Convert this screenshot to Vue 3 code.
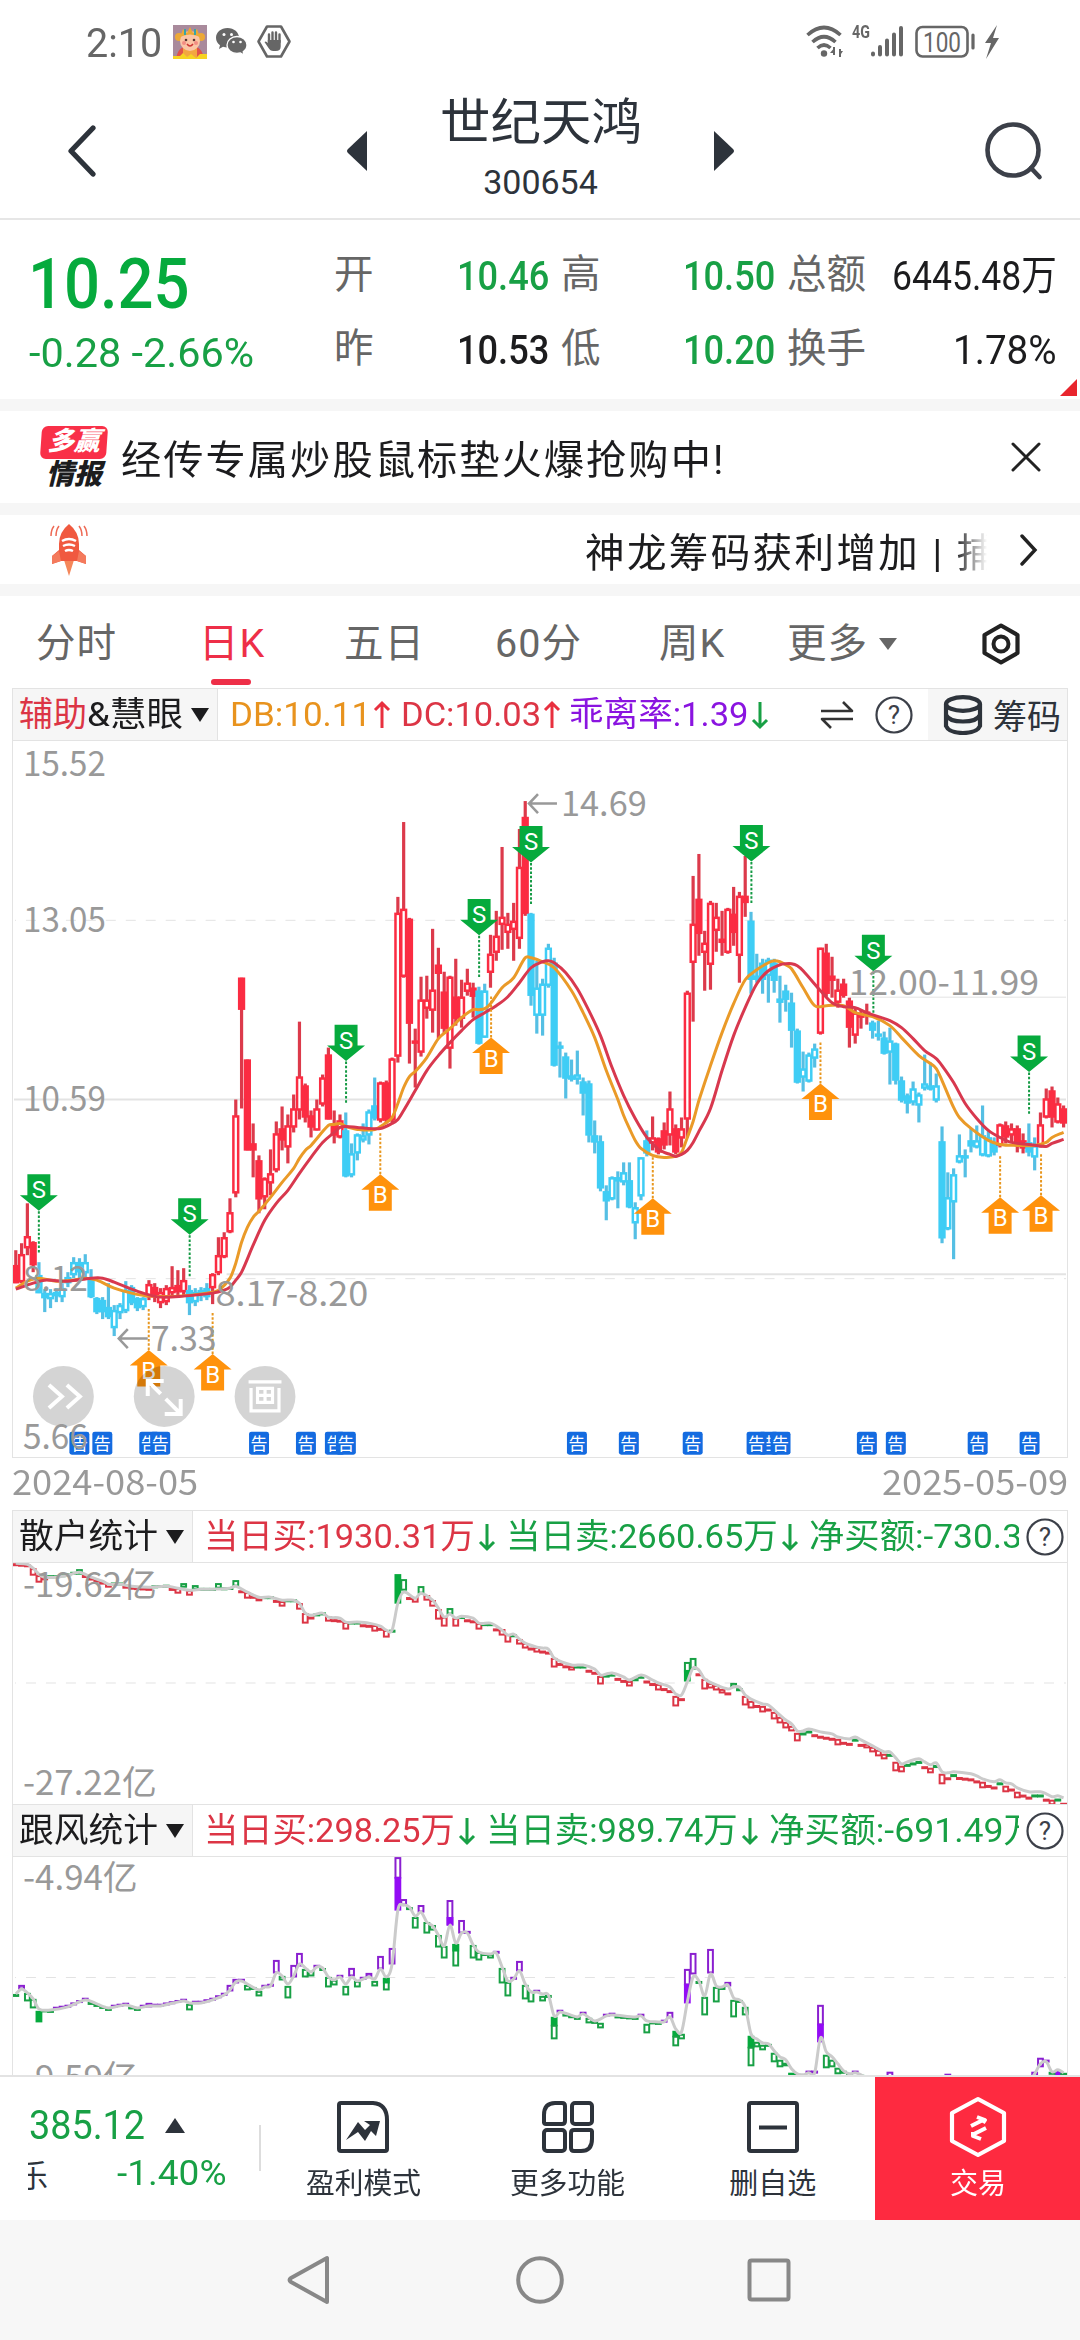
<script setup>
// 把文字横向缩放到指定宽度
const vFit = {
  mounted(el, { value }) {
    el.style.display = 'inline-block'
    el.style.whiteSpace = 'nowrap'
    const w = el.offsetWidth
    el.style.transformOrigin = 'left center'
    el.style.transform = `scaleX(${value / w})`
    el.style.marginRight = `${value - w}px`
  }
}

const STEP = 5.8
const xAt = (i) => 14.8 + STEP * i

// 每根K线: 最高 最低 实体上 实体下 类型(r/b空心, R/B实心)
const kRaw = `510 543 525 543 R,503 543 514 542 r,463 515 496 508 r,501 532 502 525 R,522 553 535 553 B,549 572 553 558 B,549 568 553 559 b,548 562 552 556 B,543 562 548 557 b,532 547 537 543 b,
517 538 522 535 b,518 540 522 532 B,514 538 522 533 b,529 558 538 557 B,557 574 558 572 B,557 579 560 572 B,543 579 567 577 B,565 596 570 588 b,563 579 565 573 b,541 573 550 571 b,
545 565 547 563 B,557 571 558 568 B,557 570 558 567 b,540 560 544 557 r,543 562 547 557 R,548 568 552 563 r,545 565 548 562 r,526 557 547 553 r,530 555 545 552 R,528 555 540 552 r,
545 575 550 563 B,548 566 552 562 b,547 561 550 555 B,543 560 548 557 B,533 564 534 548 r,497 535 515 533 r,492 518 497 517 r,458 493 472 492 r,359 457 375 453 r,237 368 237 269 R,
319 410 319 410 R,383 437 403 410 R,415 473 420 459 R,437 469 438 457 r,409 455 433 443 r,381 432 393 430 r,366 410 388 400 R,374 423 385 407 r,354 392 368 387 r,281 379 336 370 r,
343 382 345 377 R,370 397 375 387 R,359 390 368 390 r,334 366 337 364 r,307 379 314 379 R,370 403 383 395 R,374 398 380 397 r,372 437 390 436 B,403 437 413 435 b,393 420 394 413 b,
383 402 395 400 b,369 404 371 395 b,337 380 365 378 B,341 382 342 380 r,340 383 342 380 R,317 382 318 380 r,156 322 172 316 r,81 237 168 236 r,177 323 178 283 R,288 347 300 303 R,
236 316 259 312 r,235 278 259 268 r,188 292 249 270 r,207 298 224 233 R,231 293 251 288 R,235 328 236 308 r,218 285 256 278 R,239 287 256 278 r,228 255 242 251 r,242 277 247 256 R,
246 304 250 303 B,243 297 250 297 b,194 247 213 232 r,170 220 195 212 r,106 209 176 184 r,172 208 183 192 r,162 220 180 189 r,88 208 126 198 r,60 175 76 173 R,172 265 173 255 B,
220 293 247 275 b,238 295 243 275 b,203 247 207 245 b,217 326 222 325 B,301 337 305 308 b,312 358 316 338 B,319 341 335 339 b,310 344 334 339 b,337 375 341 353 B,340 402 343 395 B,
380 413 395 402 B,395 451 401 448 B,445 480 451 461 B,436 460 437 459 b,431 468 437 441 B,422 445 432 442 b,422 468 440 467 B,462 499 467 483 b,417 460 417 456 b,390 416 400 413 B,
376 410 397 403 r,397 414 398 412 R,382 409 390 405 R,351 405 368 395 r,384 414 388 412 R,377 407 388 398 r,250 397 252 379 r,135 281 183 222 r,113 215 158 193 R,190 250 202 212 r,
160 249 162 224 r,162 211 176 190 r,170 215 198 202 R,167 213 168 212 r,146 205 173 192 R,151 242 155 215 r,115 176 155 162 R,171 253 180 239 B,213 242 235 239 B,218 253 222 239 B,
217 262 219 235 b,218 252 222 240 B,235 282 258 262 B,244 271 250 259 B,252 307 262 290 B,288 343 290 342 B,311 351 328 337 b,312 342 314 341 b,303 327 308 318 b,207 294 207 293 r,
203 256 212 253 R,216 257 235 240 R,238 267 249 262 r,238 257 243 255 R,257 307 260 287 R,267 303 272 295 r,269 288 273 277 R,263 284 271 274 R,280 298 282 290 B,280 300 293 295 B,
291 314 297 313 B,287 344 300 312 b,302 344 303 340 B,336 362 340 360 B,353 373 355 363 B,341 365 348 362 b,352 382 354 365 b,314 350 343 348 b,322 350 345 349 b,333 362 345 360 b,
386 503 401 498 B,432 490 457 489 b,428 519 434 462 b,394 423 415 422 b,409 437 415 417 B,388 412 400 406 B,385 408 400 407 b,365 416 395 415 b,390 417 397 416 b,397 415 402 412 B,
383 407 384 405 r,381 403 385 397 R,383 402 388 395 r,385 412 388 405 R,393 413 400 408 R,383 416 402 412 B,397 430 405 417 b,372 407 384 405 r,348 378 358 377 r,346 387 350 377 R,
357 383 363 382 r,365 387 368 383 R`
const candles = kRaw.split(',').map((s, i) => {
  const [hi, lo, top, bot, t] = s.trim().split(' ')
  const color = t.toLowerCase() === 'r' ? '#fb2c42' : '#3fcdf5'
  return {
    x: xAt(i),
    hi: +hi,
    lo: +lo,
    top: +top + 1,
    h: Math.max(bot - top - 2, 1),
    color: color,
    wick: t.toLowerCase() === 'r' ? '#dc3a4b' : '#55bfe4',
    fill: t === t.toLowerCase() ? '#fff' : color
  }
})

const parse = (s) =>
  s.split(' ').map((p) => {
    const [i, y] = p.split(':')
    return [+i, +y]
  })
const smooth = (s) => {
  const pts = parse(s).map(([i, y]) => [xAt(i), y])
  let d = `M${pts[0]}`
  for (let k = 0; k < pts.length - 1; k++) {
    const a = pts[k - 1] || pts[k]
    const b = pts[k]
    const c = pts[k + 1]
    const e = pts[k + 2] || c
    // 三次曲线，斜率取相邻点
    const w = c[0] - b[0]
    const s1 = (c[1] - a[1]) / (c[0] - a[0])
    const s2 = (e[1] - b[1]) / (e[0] - b[0])
    d += `C${b[0] + w / 3},${b[1] + (s1 * w) / 3} ${c[0] - w / 3},${c[1] - (s2 * w) / 3} ${c[0]},${c[1]}`
  }
  return d
}
const dbLine = smooth('0:548 2:541 4:538 7:541 10:540 12:538 14:540 17:548 20:553 23:556 28:556 33:553 35:550 37:538 38:523 39:502 40:487 41:477 42:471 44:457 46:442 48:428 49:418 50:410 51:405 54:385 55:384 56:383 57:386 59:389 62:389 64:382 65:377 66:363 67:347 68:336 69:331 71:317 73:298 75:288 77:277 79:269 80:269 81:268 82:263 84:247 86:237 88:217 89:217 91:221 93:227 96:250 98:272 100:297 102:330 104:359 105:375 106:388 107:400 108:408 110:415 112:417 114:416 115:412 116:397 117:381 118:360 120:325 122:292 124:263 126:239 128:229 130:222 131:220 132:221 133:224 134:228 136:247 138:265 140:265 143:265 145:272 148:276 151:285 153:297 156:315 158:323 159:328 160:340 162:367 163:377 165:388 168:400 170:404 173:405 176:405 178:402 179:397 181:392')
const dcLine = smooth('0:549 3:543 5:540 9:541 13:538 15:538 17:542 20:549 22:553 25:557 29:556 34:553 36:550 37:547 38:540 39:532 41:505 43:480 45:463 47:450 49:433 51:417 53:402 55:392 56:387 57:386 59:387 61:388 63:388 65:383 66:379 67:370 69:350 71:330 73:315 75:302 77:290 79:279 81:272 83:265 85:256 87:242 89:227 91:221 92:220 93:222 95:232 97:248 99:270 101:295 103:327 105:355 107:378 109:397 110:403 111:409 112:412 113:414 114:416 115:414 116:410 117:402 118:391 120:368 122:330 124:295 126:267 128:243 130:230 132:224 133:223 134:223 135:225 136:230 139:250 141:262 143:266 145:267 147:272 149:276 151:280 153:287 155:298 157:310 159:318 160:325 162:342 164:363 166:378 168:390 170:397 172:402 175:404 178:406 179:403 181:399')

const sells = [[37.9, 434], [189, 458], [345.7, 284], [479, 158], [531, 85], [751.8, 84], [874, 194], [1030, 295]]
const buys = [[148, 610], [212, 614], [380, 434], [491, 297], [653, 458], [821, 343], [1001, 457], [1042, 455]]
const notices = [78.5, 101.5, 148.5, 159.5, 258.5, 305.5, 334.5, 345.5, 577, 629, 693, 769, 757, 781, 867.5, 896.5, 978.5, 1030.5]

const labels = [
  ['15.52', 22, 35, 83], ['13.05', 22, 191, 83], ['10.59', 22, 371, 83], ['8.12', 22, 551, 65], ['5.66', 22, 709, 65],
  ['14.69', 561, 75, 86], ['12.00-11.99', 849, 254, 191], ['8.17-8.20', 215, 566, 153], ['7.33', 150, 611, 66]
]

const line1 = '0:63 2:64 3:68 4:74 5:77 7:77 9:75 11:72 13:77 15:81 16:84 18:84 20:86 23:87 26:86 28:88 30:90 32:89 34:89 37:88 38:86 40:92 42:97 44:97 46:100 48:100 49:103 50:113 51:115 53:113 54:117 56:118 57:122 59:122 61:123 63:126 64:130 65:130 66:103 67:92 69:98 70:93 72:100 73:108 74:117 75:114 76:118 77:116 79:118 80:123 82:123 83:126 84:130 85:135 86:134 87:139 88:143 90:147 91:148 92:149 93:158 96:165 98:165 100:169 101:175 102:174 103:173 105:177 106:180 108:175 110:180 111:183 113:187 114:194 115:195 116:182 117:168 118:170 119:179 121:185 123:189 124:187 125:187 126:195 127:199 129:204 130:205 131:210 133:220 134:224 135:231 136:231 137:229 139:232 141:234 142:237 144:239 145:237 146:240 148:246 150:252 151:252 152:258 153:264 154:262 156:259 157:262 158:265 159:263 160:272 161:273 162:272 165:274 166:276 167:279 169:282 170:280 171:283 172:284 173:288 175:292 177:292 178:294 179:297 180:296 181:298'
const line2 = '0:195 1:190 2:194 3:200 4:210 6:211 9:208 12:201 14:205 16:209 19:206 21:209 23:207 25:207 29:202 30:204 32:204 34:201 36:196 37:191 38:183 39:182 40:185 42:191 43:188 44:187 45:174 46:177 47:185 48:177 49:165 50:169 51:173 52:168 53:169 54:178 55:181 56:178 57:185 58:178 59:182 61:178 62:180 63:170 64:178 65:165 66:111 67:106 68:108 69:117 70:113 71:123 72:127 73:136 74:147 75:126 76:144 77:134 78:134 79:146 80:153 82:155 83:154 84:168 85:182 86:180 87:172 88:185 89:193 90:193 91:195 92:196 93:217 94:213 97:218 98:215 100:222 102:217 103:216 107:218 108:217 109:222 111:223 112:223 113:218 114:230 115:233 116:203 117:178 118:182 119:197 120:175 121:187 122:188 123:186 124:199 125:201 126:208 127:235 128:240 129:244 130:245 131:252 132:258 133:261 134:270 135:275 136:276 137:274 138:274 139:239 140:253 141:258 142:265 143:272 144:275 145:274 146:276 148:282 175:282 176:275 177:265 178:263 179:273 180:271 181:274'

// 序号 上 下 颜色(大写为实心)
const bars1 = '3 68 75 r,4 75 82 r,11 69 74 g,16 83 87 r,28 88 93 r,29 83 87 g,30 90 95 r,31 85 89 g,35 83 88 g,38 80 86 g,40 92 98 r,46 101 106 r,49 103 109 r,50 113 123 r,54 116 121 r,57 122 129 r,62 125 131 r,64 130 137 r,66 74 103 G,67 79 90 g,69 97 102 r,70 86 93 g,71 95 100 r,72 100 106 r,73 109 119 r,74 117 126 r,75 108 114 g,76 118 126 r,80 123 129 r,84 129 135 r,85 134 142 r,87 139 144 r,88 143 148 r,90 147 152 r,93 158 167 r,96 166 170 r,101 176 184 r,106 181 186 r,111 184 190 r,114 196 206 r,116 162 172 g,116 170 181 G,117 158 169 g,119 179 189 r,120 183 188 r,121 185 190 r,122 189 193 r,124 183 187 g,126 196 205 r,127 201 208 r,129 206 212 r,131 212 219 r,132 217 223 r,133 222 228 r,134 226 231 r,135 233 241 r,142 239 245 r,147 244 248 r,148 247 252 r,149 250 256 r,150 254 259 r,152 262 271 r,153 266 272 r,158 268 273 r,160 274 284 r,167 282 288 r,171 286 292 r,173 292 298 r,179 300 305 r'
const bars2 = '1 186 190 p,2 194 202 g,3 200 209 g,4 212 223 G,23 204 208 p,30 205 211 g,37 186 192 p,38 180 184 p,40 186 191 g,42 192 197 g,45 161 174 p,46 177 181 g,47 187 199 g,48 166 178 p,49 154 167 p,50 170 178 g,51 172 177 g,54 178 188 g,55 181 186 g,57 187 196 g,58 169 177 p,59 182 188 g,61 174 178 p,62 182 187 g,63 157 170 p,64 179 191 g,64 179 184 G,65 149 165 p,66 58 79 p,66 78 111 P,67 100 106 p,69 118 129 g,70 106 113 p,71 123 134 g,72 126 131 g,73 136 148 g,74 147 159 g,75 101 126 p,75 118 126 P,76 145 167 g,76 145 152 G,77 121 134 p,79 146 159 g,80 153 161 g,82 155 159 g,84 169 184 g,85 183 197 g,87 162 172 p,88 186 200 g,89 192 203 g,91 197 202 g,93 218 227 G,93 226 240 g,99 219 224 g,101 224 229 g,104 225 234 g,109 225 234 g,113 213 219 p,114 232 238 G,114 237 247 g,115 235 240 g,116 170 186 p,116 185 204 P,117 154 175 p,119 198 216 g,120 150 174 p,121 188 203 g,123 183 187 p,124 201 218 g,126 208 216 g,127 237 249 G,127 248 267 g,128 243 248 g,129 246 251 g,131 254 263 g,132 261 268 g,133 264 267 g,134 274 277 G,139 206 226 p,139 225 243 P,140 256 269 g,141 261 268 g,142 269 275 g,151 273 280 p,161 275 280 p,176 273 278 p,177 259 268 p,180 272 277 P'.replace('104 225 234 g,', '')

const palette = { r: '#dc3545', g: '#18a045', G: '#06aa3d', p: '#8a1fd0', P: '#930cf5' }

function makeBars(raw, line, up, down, drift) {
  const out = raw.split(',').map((s) => {
    const [i, top, bot, t] = s.split(' ')
    const solid = t !== t.toLowerCase()
    return { x: xAt(+i) - 2.4, y: +top + 0.9, h: Math.max(bot - top - 1.4, 1), color: palette[t], fill: solid ? palette[t] : '#fff', i: +i }
  })
  const used = new Set(out.map((b) => b.i))
  // 变化很小的日子只画一条短横
  const pts = parse(line)
  const ys = []
  for (let k = 0; k < pts.length - 1; k++) {
    const [i0, y0] = pts[k]
    const [i1, y1] = pts[k + 1]
    for (let i = i0; i < i1; i++) ys[i] = y0 + ((y1 - y0) * (i - i0)) / (i1 - i0)
  }
  ys[181] = pts[pts.length - 1][1]
  ys.forEach((y, i) => {
    if (used.has(i)) return
    const rising = i > 0 && y <= ys[i - 1]
    const shift = (drift * i) / 181 + (rising ? -1.2 : 1)
    const color = palette[rising ? up : down]
    out.push({ x: xAt(i) - 2.4, y: y + shift, h: 1, color, fill: color, i })
  })
  return out
}
const stats = [
  {
    name: '散户统计', cls: 'stat-a', top: '-19.62亿', topW: 134, topY: 97, bottom: '-27.22亿', bottomW: 134, bottomY: 295, mid: 183,
    box: '12 63 1056 241', line: smooth(line1), bars: makeBars(bars1, line1, 'g', 'r', 5),
    vals: [['当日买:1930.31万', 271, 'red'], ['当日卖:2660.65万', 272, 'green'], ['净买额:-730.34万', 268, 'green']]
  },
  {
    name: '跟风统计', cls: 'stat-b', top: '-4.94亿', topW: 115, topY: 91, bottom: '-9.59亿', bottomW: 115, bottomY: 291, mid: 178.5,
    box: '12 58 1056 218', line: smooth(line2), bars: makeBars(bars2, line2, 'p', 'g', 0),
    vals: [['当日买:298.25万', 251, 'red'], ['当日卖:989.74万', 252, 'green'], ['净买额:-691.49万', 270, 'green']]
  }
]
</script>

<template>
  <div class="page">
    <div class="status">
      <span class="clock" v-fit="76">2:10</span>
      <svg class="avatar" width="34" height="34" viewBox="0 0 34 34">
        <rect width="34" height="34" fill="#a98a9c" />
        <path d="M3 34Q5 20 17 21Q29 20 31 34Z" fill="#e0524a" />
        <rect x="10" y="21" width="14" height="13" rx="3" fill="#f3a640" />
        <circle cx="6" cy="12" r="4" fill="#eda936" /><circle cx="28" cy="12" r="4" fill="#eda936" />
        <circle cx="17" cy="16" r="10" fill="#fbc5a6" />
        <path d="M7 12L10 4L14 8L17 2L20 8L24 4L27 12Q17 7 7 12Z" fill="#eda936" />
        <path d="M12 4v6M22 4v6" stroke="#38a4a8" stroke-width="2" />
        <circle cx="13" cy="15" r="1.3" fill="#5b3330" /><circle cx="21" cy="15" r="1.3" fill="#5b3330" />
        <circle cx="11" cy="18" r="2" fill="#f28d83" /><circle cx="23" cy="18" r="2" fill="#f28d83" />
        <path d="M14 19Q17 23 20 19" stroke="#c33" stroke-width="1.5" fill="none" />
        <path d="M0 31h7l3-3 4 4 4-3 5 4 4-4h7v5H0z" fill="#f6d322" />
      </svg>
      <svg class="wechat" width="32" height="28" viewBox="0 0 32 28">
        <path d="M11.500 0C5 0 0 4.300 0 9.800c0 3.200 1.500 5.700 4 7.500L3 21l4-2.200c1.500.4 3 .6 4.500.6C18 19.400 23 15 23 9.800 23 4.300 18 0 11.500 0z" fill="#666" />
        <path d="M21 8.500c-5.500 0-10 3.800-10 8.500s4.500 8.400 10 8.400c1.200 0 2.300-.2 3.400-.5L28 27l-.8-3.300c2.400-1.700 3.800-4 3.800-6.700 0-4.700-4.500-8.500-10-8.500z" fill="#666" stroke="#fff" stroke-width="1.300" />
        <g fill="#fff"><circle cx="8" cy="6.500" r="1.500" /><circle cx="15.500" cy="6.500" r="1.500" /><circle cx="17.500" cy="14" r="1.300" /><circle cx="24.500" cy="14" r="1.300" /></g>
      </svg>
      <svg class="hand" width="34" height="33" viewBox="0 0 34 33">
        <path d="M10 1.500h14L32.500 16.500 24 31.500H10L1.500 16.500z" fill="none" stroke="#666" stroke-width="2.600" stroke-linejoin="round" />
        <path d="M12 17V9.500M15.500 16V7.500M19 16V7.500M22.500 17V9.500" stroke="#666" stroke-width="2.400" stroke-linecap="round" />
        <path d="M10.800 15h12.900v6.500q0 4.500-5 4.500h-2.500q-3 0-5-3.500L7.500 17q1.500-1.500 3.300 1z" fill="#666" />
      </svg>
      <span class="spacer"></span>
      <svg width="40" height="34" viewBox="0 0 40 34" fill="none" stroke="#666" stroke-width="3.600">
        <path d="M1.500 10Q18 -5 34.500 10M6.500 17Q18 6.500 29.500 17M11.500 23Q18 17 24.500 23" />
        <circle cx="18" cy="28.500" r="3.200" fill="#666" stroke="none" />
        <path d="M28 22v8M34 32v-8" stroke-width="2" /><path d="M24 28l5-6v6zM33 32v-6h4z" fill="#666" stroke="none" />
      </svg>
      <span class="net" v-fit="18">4G</span>
      <svg width="34" height="33" viewBox="0 0 34 33" stroke="#666" stroke-width="4" stroke-linecap="round">
        <path d="M3 28.500v1M10 22v7.500M17 15.500v14M24 9.500v20M31 3v26.500" />
      </svg>
      <svg class="battery" width="62" height="34" viewBox="0 0 62 34">
        <rect x="1.500" y="2" width="51" height="29.500" rx="6" fill="none" stroke="#666" stroke-width="2.600" />
        <path d="M58 10v13" stroke="#666" stroke-width="3.200" stroke-linecap="round" />
        <text x="8" y="26.500" font-size="27" textLength="38" lengthAdjust="spacingAndGlyphs" fill="#666">100</text>
      </svg>
      <svg width="16" height="36" viewBox="0 0 16 36"><path d="M13 1L1 19h6L2 35 15 14H9z" fill="#666" /></svg>
    </div>

    <div class="header">
      <svg width="30" height="52" viewBox="0 0 30 52"><path d="M26 3L4 26l22 23" fill="none" stroke="#2d333b" stroke-width="5.200" stroke-linecap="round" stroke-linejoin="round" /></svg>
      <svg class="prev" width="20" height="40" viewBox="0 0 20 40"><path d="M20 0v40L1 22q-2-2 0-4z" fill="#2d333b" /></svg>
      <div class="title">
        <h1><span v-fit="202">世纪天鸿</span></h1>
        <p><span v-fit="115">300654</span></p>
      </div>
      <svg class="next" width="20" height="40" viewBox="0 0 20 40"><path d="M0 0v40l19-18q2-2 0-4z" fill="#2d333b" /></svg>
      <svg class="search" width="60" height="60" viewBox="0 0 60 60" fill="none" stroke="#3c4049" stroke-width="4.600" stroke-linecap="round"><circle cx="29" cy="29" r="25.500" /><path d="M47 47l8.500 9" /></svg>
    </div>

    <div class="quote">
      <div class="last">
        <div class="big"><span v-fit="162">10.25</span></div>
        <div class="chg"><span v-fit="225">-0.28 -2.66%</span></div>
      </div>
      <div class="cell c1"><div><label>开</label><b class="green"><span v-fit="92">10.46</span></b></div><div><label>昨</label><b><span v-fit="92">10.53</span></b></div></div>
      <div class="cell c2"><div><label>高</label><b class="green"><span v-fit="92">10.50</span></b></div><div><label>低</label><b class="green"><span v-fit="92">10.20</span></b></div></div>
      <div class="cell c3"><div><label>总额</label><b><span v-fit="165">6445.48万</span></b></div><div><label>换手</label><b><span v-fit="104">1.78%</span></b></div></div>
      <i class="corner"></i>
    </div>

    <div class="news">
      <div class="logo"><span class="l1">多赢</span><span class="l2">情报</span></div>
      <span class="msg" v-fit="604">经传专属炒股鼠标垫火爆抢购中!</span>
      <svg width="30" height="30" viewBox="0 0 30 30"><path d="M2 2l26 26M28 2L2 28" stroke="#222" stroke-width="3" stroke-linecap="round" /></svg>
    </div>
    <div class="rocket">
      <svg width="42" height="52" viewBox="0 0 42 52">
        <path d="M16 36h10l-5 16z" fill="#f5875a" />
        <path d="M21 0Q31 8 31 20v6l7 6v8l-9-3H13l-9 3v-8l7-6v-6Q11 8 21 0z" fill="#f0593f" />
        <path d="M11 27l-7 5v8l9-3zM31 27l7 5v8l-9-3z" fill="#f47a5c" />
        <path d="M14 17q7-4 14 0M15 22q6-3 12 0M17 27q4-2 8 0" stroke="#fff" stroke-width="2.500" fill="none" />
        <path d="M6 2Q3 6 3 12M11 2Q8 6 8 12M36 2q3 4 3 10M31 2q3 4 3 10" stroke="#ee6a55" stroke-width="1.500" fill="none" />
      </svg>
      <div class="marquee"><span>神龙筹码获利增加 | 捕</span></div>
      <svg width="18" height="34" viewBox="0 0 18 34"><path d="M2 3l13 14L2 31" fill="none" stroke="#222" stroke-width="3.400" stroke-linecap="round" /></svg>
    </div>

    <div class="tabs">
      <span class="t1">分时</span><span class="t2 on">日K</span><span class="t3">五日</span><span class="t4">60分</span><span class="t5">周K</span><span class="t6">更多<i class="tri"></i></span>
      <svg width="40" height="42" viewBox="0 0 40 42" fill="none" stroke="#222"><path d="M20 2.500L36.500 12v18L20 39.500 3.500 30V12z" stroke-width="4.200" stroke-linejoin="round" /><circle cx="20" cy="21" r="7.500" stroke-width="4" /></svg>
    </div>

    <div class="bar main-bar">
      <div class="pick"><span class="red" v-fit="68">辅助</span><span v-fit="96">&amp;慧眼</span><i class="tri"></i></div>
      <div class="vals">
        <span class="orange" v-fit="141">DB:10.11</span><svg class="arr" viewBox="0 0 18 30"><path d="M9 28V3M2 10l7-7 7 7" stroke="#e8303f" /></svg>
        <span class="red dc" v-fit="140">DC:10.03</span><svg class="arr" viewBox="0 0 18 30"><path d="M9 28V3M2 10l7-7 7 7" stroke="#e8303f" /></svg>
        <span class="purple gl" v-fit="180">乖离率:1.39</span><svg class="arr" viewBox="0 0 18 30"><path d="M9 2v25M2 20l7 7 7-7" stroke="#18a045" /></svg>
      </div>
      <svg class="swap" width="34" height="30" viewBox="0 0 34 30"><path d="M1 11h31L23 2M33 19H2l9 9" fill="none" stroke="#333" stroke-width="2.600" stroke-linejoin="round" /></svg>
      <svg class="help" width="38" height="38" viewBox="0 0 38 38"><circle cx="19" cy="19" r="17.500" fill="none" stroke="#3c4049" stroke-width="2.200" /><text x="19" y="28" font-size="26" text-anchor="middle" fill="#3c4049">?</text></svg>
      <div class="chips">
        <svg width="40" height="40" viewBox="0 0 40 40" fill="none" stroke="#2d333b" stroke-width="4.200"><ellipse cx="20" cy="9" rx="17" ry="6.800" /><path d="M3 9v22q3 7 17 7t17-7V9M3 20q3 6.500 17 6.500T37 20" /></svg>
        <span v-fit="68">筹码</span>
      </div>
    </div>

    <svg class="kline" width="1056" height="717" viewBox="12 0 1056 717">
      <g fill="none" stroke="#e3e3e3">
        <path d="M14 179.500H1067M14 538.500H1067" stroke-dasharray="10 10" stroke-dashoffset="9" />
        <path d="M13 359H1067" stroke-width="2" /><path d="M226 534H1067" stroke-width="2" /><path d="M850 256.500H1067" />
      </g>
      <g v-for="(c, i) in candles" :key="i">
        <rect :x="c.x - 1.6" :y="c.hi" width="3.2" :height="c.lo - c.hi" :fill="c.wick" />
        <rect :x="c.x - 2.4" :y="c.top" width="4.8" :height="c.h" :fill="c.fill" :stroke="c.color" stroke-width="2.500" />
      </g>
      <path :d="dbLine" fill="none" stroke="#ea9a28" stroke-width="3" />
      <path :d="dcLine" fill="none" stroke="#d8384e" stroke-width="3" />
      <g v-for="s in sells" :key="'s' + s[0]" :transform="`translate(${s[0]} ${s[1]})`">
        <path d="M0 37V80" stroke="#159a44" stroke-width="2" stroke-dasharray="2.500 1.800" />
        <path d="M-11.500 0H11.500V21H19L0 36.500-19 21H-11.500Z" fill="#06aa3d" />
        <text y="24" class="mk">S</text>
      </g>
      <g v-for="b in buys" :key="'b' + b[0]" :transform="`translate(${b[0]} ${b[1]})`">
        <path d="M0 0V-42" stroke="#e8971f" stroke-width="2" stroke-dasharray="2.500 1.800" />
        <path d="M-11.500 36.500H11.500V15.500H19L0 0-19 15.500H-11.500Z" fill="#ff920c" />
        <text y="29" class="mk">B</text>
      </g>
      <g v-for="n in notices" :key="n">
        <rect :x="n - 10" y="692" width="20" height="23" rx="2.500" fill="#146be0" />
        <text :x="n" y="710" class="gao">告</text>
      </g>
      <g fill="#000" fill-opacity=".17"><circle cx="62.500" cy="656.500" r="30.500" /><circle cx="163.500" cy="656.500" r="30.500" /><circle cx="264.500" cy="656.500" r="30.500" /></g>
      <g fill="none" stroke="#fff" stroke-width="4">
        <path d="M48 645l13 11.500L48 668M66 645l13 11.500L66 668" />
        <path d="M147 656V641H163M148 642l12 12M180 659V674H164M179 673l-14-14" />
        <path d="M248 642H281M250.500 648V671H278.500V648M257 648.500h15v14h-15zM257 655.500h15M264.500 648v15" stroke-width="3.200" />
      </g>
      <g class="axis"><text v-for="l in labels" :key="l[0]" :x="l[1]" :y="l[2]" :textLength="l[3]" lengthAdjust="spacingAndGlyphs">{{ l[0] }}</text></g>
      <path d="M557 62.500H529M538 53l-9 9.500 9 9.500M147 598.500H118M127 589l-9 9.500 9 9.500" fill="none" stroke="#999" stroke-width="2.600" />
    </svg>
    <div class="dates"><span v-fit="186">2024-08-05</span><span v-fit="186">2025-05-09</span></div>

    <div v-for="s in stats" :key="s.name" :class="s.cls">
      <div class="bar">
        <div class="pick wide"><span v-fit="139">{{ s.name }}</span><i class="tri"></i></div>
        <div class="vals clip">
          <template v-for="(v, k) in s.vals" :key="v[0]">
            <span :class="v[2]" v-fit="v[1]">{{ v[0] }}</span>
            <svg v-if="k < 2" class="arr down" viewBox="0 0 18 30"><path d="M9 2v25M2 20l7 7 7-7" stroke="#18a045" /></svg>
          </template>
        </div>
        <svg class="help last-help" width="38" height="38" viewBox="0 0 38 38"><circle cx="19" cy="19" r="17.500" fill="none" stroke="#3c4049" stroke-width="2.200" /><text x="19" y="28" font-size="26" text-anchor="middle" fill="#3c4049">?</text></svg>
      </div>
      <svg class="plot" :viewBox="s.box">
        <path :d="`M14 ${s.mid}H1067`" stroke="#e3e3e3" stroke-dasharray="10 10" stroke-dashoffset="9" />
        <rect v-for="(b, k) in s.bars" :key="k" :x="b.x" :y="b.y" width="4.8" :height="b.h" :fill="b.fill" :stroke="b.color" stroke-width="2" />
        <path :d="s.line" fill="none" stroke="#cbcbcb" stroke-width="3" stroke-linejoin="round" />
        <g class="axis">
          <text x="22" :y="s.topY" :textLength="s.topW" lengthAdjust="spacingAndGlyphs">{{ s.top }}</text>
          <text x="22" :y="s.bottomY" :textLength="s.bottomW" lengthAdjust="spacingAndGlyphs">{{ s.bottom }}</text>
        </g>
      </svg>
    </div>

    <div class="bottom">
      <div class="index">
        <div class="row1"><span class="green" v-fit="116">385.12</span><i class="up"></i></div>
        <div class="row2"><span class="cut"><em>乐</em></span><span class="green" v-fit="110">-1.40%</span></div>
      </div>
      <div class="item">
        <svg viewBox="0 0 54 54" fill="none" stroke="#2d333b" stroke-width="4"><path d="M5 3H37Q51 4 51 20V49q0 2-2 2H5q-2 0-2-2V5q0-2 2-2z" /><path d="M10 40l12-18 7 8 5-5-6-4h16l-4 15-5-5-6 10-7-9z" fill="#2d333b" stroke="none" /></svg>
        <span v-fit="115">盈利模式</span>
      </div>
      <div class="item">
        <svg viewBox="0 0 54 54" fill="none" stroke="#2d333b" stroke-width="4"><path d="M3 23V15Q3 3 14 3h7q3 0 3 3v15q0 3-3 3H5q-2 0-2-2zM51 31v8q0 12-11 12h-7q-3 0-3-3V33q0-3 3-3h16q2 0 2 2z" /><rect x="31" y="3" width="20" height="21" rx="3" /><rect x="3" y="30" width="21" height="21" rx="3" /></svg>
        <span v-fit="115">更多功能</span>
      </div>
      <div class="item">
        <svg viewBox="0 0 54 54" fill="none" stroke="#2d333b" stroke-width="4"><rect x="3" y="3" width="48" height="48" rx="2" /><path d="M13 27.500h28" /></svg>
        <span v-fit="87">删自选</span>
      </div>
      <div class="item trade">
        <svg viewBox="0 0 60 62" fill="none" stroke="#fff" stroke-width="4.200" stroke-linejoin="round"><path d="M30 3L56 17V45L30 59 4 45V17z" /><path d="M23 30L35 24M29 21l8 3-2 3M38 32L26 38M25 36l0 4 8 3" stroke-width="4" /></svg>
        <span v-fit="56">交易</span>
      </div>
    </div>
    <div class="nav">
      <svg width="44" height="50" viewBox="0 0 44 50"><path d="M40 3v44L4 27q-3-2 0-4z" /></svg>
      <svg width="50" height="50" viewBox="0 0 50 50"><circle cx="25" cy="25" r="21.800" /></svg>
      <svg width="44" height="44" viewBox="0 0 44 44"><rect x="2.500" y="2.500" width="39" height="39" rx="2" /></svg>
    </div>
  </div>
</template>

<style>
body {
  background: #fff;
}
</style>

<style scoped>
.page {
  width: 1080px;
  height: 2340px;
  overflow: hidden;
  background: #fff;
  color: #1c1c1e;
  font-family: Roboto, 'Noto Sans CJK SC', sans-serif;
  display: flex;
  flex-direction: column;
}
.page > * {
  flex-shrink: 0;
  box-sizing: border-box;
}
svg {
  display: block;
  flex-shrink: 0;
}
.red {
  color: #dc3545;
}
.green {
  color: #18a045;
}
.orange {
  color: #e8931e;
}
.purple {
  color: #8a14e0;
}
.status {
  height: 75px;
  padding: 8px 80px 0 86px;
  display: flex;
  align-items: center;
  color: #666;
}
.clock {
  font-size: 40px;
  margin-top: 3px;
}
.avatar {
  margin-left: 11px;
}
.wechat {
  margin-left: 9px;
}
.hand {
  margin-left: 9px;
}
.spacer {
  flex: 1;
}
.net {
  font-size: 19px;
  font-weight: 700;
  align-self: flex-start;
  line-height: 20px;
  margin-top: 14px;
  margin-left: 6px;
}
.battery {
  margin: 0 7px 0 11px;
}
.header {
  height: 145px;
  padding: 8px 36px 0 67px;
  border-bottom: 2px solid #e6e6e6;
  display: flex;
  align-items: center;
  color: #2d333b;
}
.prev {
  margin-left: 250px;
}
.title {
  width: 347px;
  text-align: center;
}
.title h1 {
  margin: -12px 0 0;
  font-size: 50px;
  font-weight: 400;
  line-height: 70px;
}
.title p {
  margin: 4px 0 0;
  font-size: 34px;
  line-height: 40px;
}
.search {
  margin-left: auto;
}
.quote {
  position: relative;
  height: 179px;
  display: flex;
  font-size: 40.500px;
}
.last {
  width: 334px;
  padding-left: 28px;
  box-sizing: border-box;
}
.big {
  font-size: 70px;
  line-height: 80px;
  margin-top: 24px;
  color: #06aa3d;
  font-weight: 500;
}
.chg {
  color: #18a045;
  line-height: 50px;
  margin-top: 4px;
  padding-left: 1px;
}
.cell {
  padding-top: 29px;
}
.cell > div {
  height: 74px;
  line-height: 54px;
  display: flex;
  justify-content: space-between;
}
.cell b {
  font-weight: 400;
}
.cell b.green,
.c1 b {
  font-weight: 500;
}
.cell label {
  color: #666;
  font-size: 39.500px;
  line-height: 52px;
}
.c1 {
  width: 215px;
}
.c2 {
  width: 214px;
  margin-left: 12px;
}
.c3 {
  width: 270px;
  margin-left: 12px;
}
.corner {
  position: absolute;
  right: 3px;
  bottom: 3px;
  border-left: 17px solid transparent;
  border-bottom: 17px solid #e8252d;
}
.news {
  height: 116px;
  border: solid #f6f6f6;
  border-width: 12px 0;
  display: flex;
  align-items: center;
  padding: 0 39px 0 41px;
}
.logo {
  width: 66px;
  margin-right: 14px;
  display: flex;
  flex-direction: column;
  font-weight: 900;
  font-style: italic;
  text-align: center;
}
.l1 {
  height: 33px;
  line-height: 31px;
  font-size: 26px;
  border-radius: 6px;
  transform: skewX(-4deg);
  background: #f93048;
  color: #fff;
}
.l2 {
  height: 30px;
  line-height: 31px;
  font-size: 28px;
}
.msg {
  font-size: 40px;
  letter-spacing: 2px;
}
.news > svg {
  margin-left: auto;
}
.rocket {
  height: 81px;
  border-bottom: 12px solid #f6f6f6;
  padding: 0 42px 0 48px;
  display: flex;
  align-items: center;
}
.marquee {
  width: 402px;
  margin-left: 495px;
  overflow: hidden;
  white-space: nowrap;
  font-size: 39.500px;
  letter-spacing: 2.400px;
  -webkit-mask-image: linear-gradient(90deg, #000 92%, transparent);
  mask-image: linear-gradient(90deg, #000 92%, transparent);
}
.rocket > svg:last-child {
  margin-left: auto;
}
.tabs {
  height: 92px;
  display: flex;
  align-items: center;
  font-size: 39.500px;
  letter-spacing: 1px;
  color: #666;
  padding: 3px 59px 0 0;
}
.tabs span {
  height: 60px;
  line-height: 60px;
  white-space: nowrap;
}
.t1 {
  margin-left: 36px;
  width: 163px;
}
.t2 {
  width: 145px;
}
.t3 {
  width: 151px;
}
.t4 {
  width: 164px;
}
.t5 {
  width: 128px;
}
.t6 {
  display: flex;
  align-items: center;
  gap: 11px;
}
.tabs svg {
  margin-left: auto;
}
.on {
  color: #ee2f48;
  position: relative;
}
.on::after {
  content: '';
  position: absolute;
  left: 12px;
  bottom: -11px;
  width: 40px;
  height: 6px;
  border-radius: 4px;
  background: #ee2f48;
}
.tri {
  border: 9.500px solid transparent;
  border-top: 14px solid currentColor;
  border-bottom: 0;
}
.tabs .tri {
  border-width: 12px 9px 0;
}
.bar {
  height: 53px;
  width: 1056px;
  margin-left: 12px;
  border: 1.500px solid #e3e3e3;
  box-sizing: border-box;
  display: flex;
  align-items: center;
  font-size: 34px;
}
.pick {
  height: 100%;
  width: 205px;
  box-sizing: border-box;
  padding-left: 6px;
  background: #f6f6f6;
  border-right: 1px solid #e3e3e3;
  display: flex;
  align-items: center;
}
.pick span {
  line-height: 44px;
  margin-top: -2px;
}
.pick .tri {
  margin-left: 8px;
}
.wide {
  width: 180px;
}
.vals {
  display: flex;
  align-items: center;
  margin-left: 12px;
  font-size: 34px;
}
.vals span {
  line-height: 44px;
  margin-top: -2px;
}
.clip {
  width: 815px;
  margin-left: 11px;
  overflow: hidden;
}
.clip > span {
  flex-shrink: 0;
}
.arr {
  width: 18px;
  height: 30px;
  margin-left: 2px;
  fill: none;
  stroke-width: 3;
}
.down {
  margin: 0 10px 0 3px;
}
.dc {
  margin-left: 10px;
}
.gl {
  margin-left: 8px;
}
.swap {
  margin-left: auto;
}
.help {
  margin-left: 21px;
}
.last-help {
  margin: 0 3px 0 auto;
}
.chips {
  width: 139px;
  height: 100%;
  margin-left: 15px;
  box-sizing: border-box;
  padding-left: 15px;
  display: flex;
  align-items: center;
  gap: 10px;
  background: #f6f6f6;
  color: #2d333b;
}
.kline {
  margin-left: 12px;
  border: solid #e3e3e3;
  border-width: 0 1.500px 1.500px;
}
.axis text {
  font-family: 'Noto Sans CJK SC', sans-serif;
  font-size: 34.500px;
  fill: #999;
}
.mk {
  font-size: 24px;
  fill: #fff;
  text-anchor: middle;
}
.gao {
  font-size: 17px;
  fill: #fff;
  text-anchor: middle;
}
.dates {
  height: 52px;
  padding: 0 12px 7px;
  display: flex;
  justify-content: space-between;
  align-items: center;
  font-family: 'Noto Sans CJK SC', sans-serif;
  font-size: 34.500px;
  line-height: 45px;
  color: #999;
}
.plot {
  width: 1056px;
  margin-left: 12px;
  box-sizing: border-box;
  border: solid #e3e3e3;
  border-width: 0 1.500px;
}
.stat-a .plot {
  height: 241px;
}
.stat-b .plot {
  height: 218px;
}
.bottom {
  height: 145px;
  border-top: 2px solid #e3e3e3;
  background: #fff;
  display: flex;
  color: #2d333b;
}
.index {
  width: 261px;
  height: 46px;
  margin-top: 48px;
  box-sizing: border-box;
  border-right: 2px solid #ddd;
}
.row1 {
  margin-top: -24px;
  height: 48px;
  padding-left: 29px;
  display: flex;
  align-items: center;
  font-size: 41px;
}
.up {
  margin-left: 20px;
  border: 10px solid transparent;
  border-bottom: 15px solid #2d333b;
  border-top: 0;
}
.row2 {
  height: 48px;
  padding-left: 28px;
  display: flex;
  align-items: center;
  font-size: 35px;
}
.cut {
  width: 89px;
  overflow: hidden;
  font-size: 31px;
}
.cut em {
  font-style: normal;
  margin-left: -11px;
}
.item {
  width: 205px;
  display: flex;
  flex-direction: column;
  align-items: center;
  padding-top: 23px;
  box-sizing: border-box;
  font-size: 29px;
}
.item svg {
  width: 54px;
  height: 54px;
  margin-bottom: 8px;
}
.item span {
  line-height: 44px;
}
.trade {
  background: #fe2a40;
  color: #fff;
  padding-top: 19px;
}
.trade svg {
  width: 60px;
  height: 62px;
  margin-bottom: 4px;
}
.nav {
  height: 120px;
  background: #f7f7f7;
  display: flex;
  align-items: center;
  padding-left: 287px;
}
.nav svg {
  fill: none;
  stroke: #888;
  stroke-width: 4;
  stroke-linejoin: round;
}
.nav svg + svg {
  margin-left: 184px;
}
.nav svg:last-child {
  margin-left: 182px;
}
</style>
